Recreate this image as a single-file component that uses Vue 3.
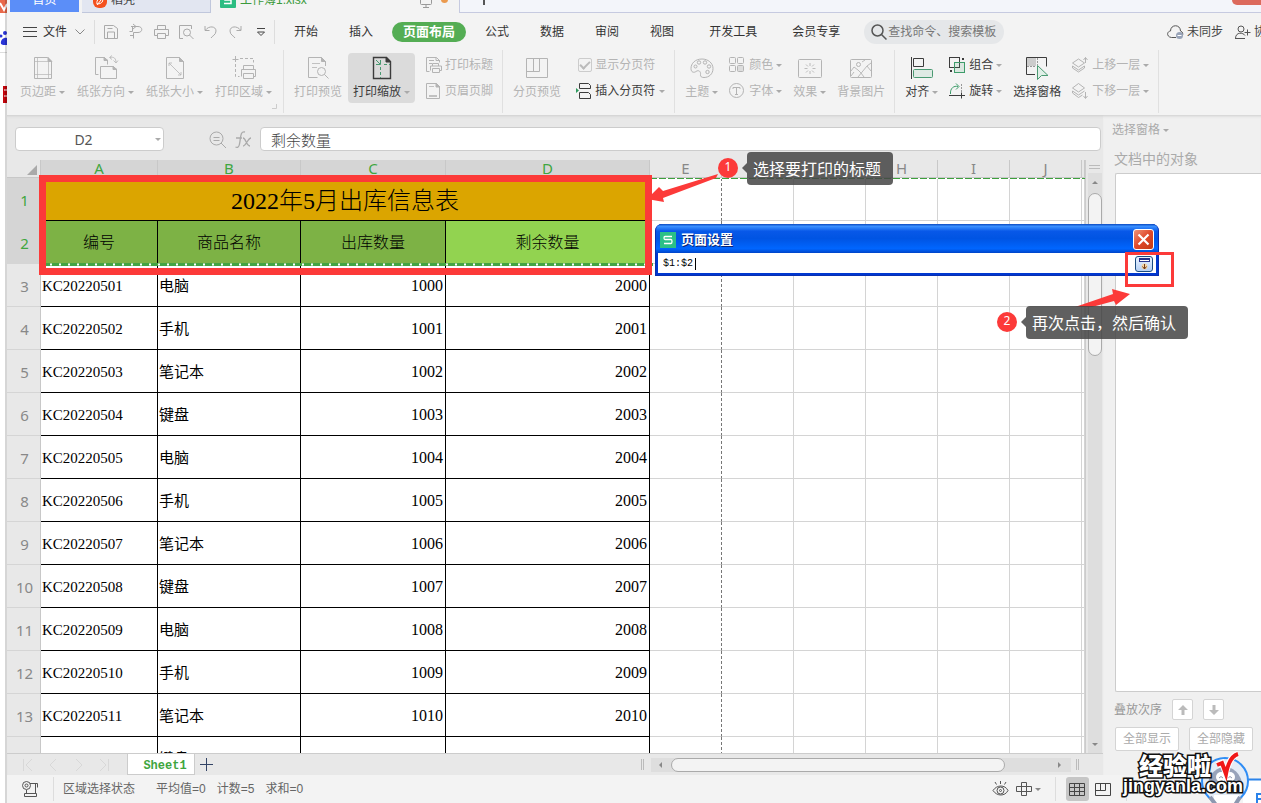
<script setup>
import { ref } from 'vue'

const formula = ref('剩余数量')
const cellName = ref('D2')
const printRows = ref('$1:$2')
const showBreaks = ref(true)
const query = ref('')

const icons = {
  margins: '<path d="M3.500 1.500h13l4 4v17h-17z"/><path d="M6.500 1.500v21M17.500 1.500v21M3 5.500h18M3 18.500h18" stroke-width=".7"/><path d="M17 1.500v4h4z" fill="currentColor"/>',
  orient: '<path d="M4.500 18.500h-3v-17h9l3 3v4"/><path d="M6.500 10.500h13l3 3v9h-16z"/><path d="M10 1.500v3h4zM19 10.500v3h4z" fill="currentColor"/><path d="M16 1.500c4-1 6 1 6 5m-2.500-2l2.500 2.500 2-2.500M18 -.5l-2.500 2 2.500 2" stroke-width=".8"/>',
  size: '<path d="M3.500 1.500h13l4 4v17h-17z"/><path d="M16.500 1.500v4h4z" fill="currentColor"/><path d="M6 7l12 12M6 10V7h3M18 16v3h-3" stroke-width=".8"/>',
  area: '<path d="M3.500 0v6M.5 3.500h6"/><path d="M8 2.500h13.500v4M3.500 8v12.500h4" stroke-dasharray="3 2"/><path d="M11.500 13v-3.500h10V13M9.500 20.500v-7h14v7h-2.500M11.500 17.500h10v5h-10z"/>',
  preview: '<path d="M19.500 10V5.500l-4-4h-13v20h9"/><path d="M15.500 1.500v4h4z" fill="currentColor"/><path d="M6 7.500h8M6 11.500h5" stroke-width=".8"/><circle cx="15.500" cy="15.500" r="4"/><path d="M18.500 18.500l4 4"/>',
  scale: '<path d="M3.500 1.500h13l4 4v17h-17z" stroke-width="1.400"/><path d="M16 1.500v4.500h5z" fill="currentColor"/><g stroke="#4a9a72"><path d="M6 4l4 4M10.500 4v4.500H6"/><path d="M14 8.500h6M10.500 11v11" stroke-dasharray="3 2"/></g>',
  breaks: '<path d="M1.500 2.500h21v19h-21zM1.500 15.500h13v-13M8.500 2.500v13"/>',
  theme: '<path d="M12 3C5 3 1 7.500 1 12.500c0 4 3 4.500 5 3 2.500-2 5 0 4.500 3-.3 2 1 3 3.500 3 5 0 9-3.500 9-9C23 7 18 3 12 3z"/><circle cx="5.500" cy="10.500" r="1.500"/><circle cx="9" cy="6.500" r="1.700"/><circle cx="15" cy="6.500" r="1.700"/><circle cx="19" cy="10.500" r="1.700"/><circle cx="17.500" cy="16" r="1.700"/>',
  effect: '<rect x=".5" y="3.500" width="23" height="18" rx="1"/><path d="M12 7v3M12 15v3M6.500 12.500h3M14.500 12.500h3M8 8.500l2 2M14 14.500l2 2M16 8.500l-2 2M8 16.500l2-2" stroke-width=".9"/>',
  backdrop: '<rect x="1.500" y="3.500" width="21" height="18" rx="1"/><circle cx="9.500" cy="8.500" r="2"/><path d="M2 15l3-4 4 3 3 3 3 4M9 21l9-11 4-3M2 20l3-4M13 6l3-2M18 10l4 5" stroke-width=".9"/>',
  align: '<path d="M1.500 1v22M3.500 2.500h10v8h-10z"/><rect x="3.500" y="13.500" width="19" height="8" rx="1" stroke="#4a9a72" fill="#dfeae4"/>',
  pane: '<path d="M10 18.500H1.500v-17h20v9"/><path d="M2 2h9v8H2z" fill="#ccc" stroke="none"/><path d="M12.500 2v7M2 10.500h9" stroke="#999" stroke-dasharray="2 1"/><path d="M12.500 9.500v14l4-4h6.500z" stroke="#4a9a72" fill="#e0efe7"/>',
  title: '<path d="M3.500 14.500h-3v-14h10l3 3v2"/><path d="M10 .5v3h4M3 3.500h5M3 6.500h3" /><path d="M6.500 9v-2.500h6V9M4.500 13.500v-4.500h11v4.500h-2M6.500 11.500h7v4h-7z"/>',
  headfoot: '<path d="M.5 .5h10l3 3v12H.5z"/><path d="M10 .5v3.500h4z" fill="currentColor"/><path d="M3 3.500h5M3 12.500h8M3 13.500h8" stroke-width=".8"/>',
  insbreak: '<path d="M3.500 5.500v-5h9l2 2v3zM3.500 15.500v-6h9l2 2v4z"/><path d="M3 7.500h13" stroke="#f3f3f3"/><path d="M0 5l3 2.500-3 2.500z" fill="#2f9a5e" stroke="none"/>',
  colors: '<rect x=".5" y=".5" width="6" height="6" rx="1"/><rect x="8.500" y=".5" width="6" height="6" rx="1"/><rect x=".5" y="8.500" width="6" height="6" rx="1"/><rect x="8.500" y="8.500" width="6" height="6" rx="1" fill="#ddd"/>',
  font: '<circle cx="7.500" cy="7.500" r="7"/><path d="M4 6V4.500h7V6M7.500 4.500v7M6 11.500h3"/>',
  combine: '<rect x=".5" y=".5" width="10" height="10"/><rect x="5.500" y="5.500" width="10" height="10" stroke="#3d9c6a" fill="#3d9c6a22"/><path d="M13 1h2v2h-2zM1 13h2v2H1z" fill="currentColor" stroke="none"/>',
  rotate: '<path d="M0 12.500h16M12.500 9.500v6"/><path d="M1.500 11C1 5 5 2.500 9 3.500M7 .5l3 3-3 3" stroke="#3d9c6a"/><path d="M12.500 1v8" stroke="#999" stroke-dasharray="2 1"/>',
  up: '<path d="M.5 6L6.500 2l6 4-6 4z"/><path d="M.5 9v2l6 4 6-4V9l-6 4z"/><path d="M13.500 6V.5M11.500 3l2-2.500 2 2.500"/>',
  down: '<path d="M.5 5L6.500 .5l6 4.500-6 4z"/><path d="M.5 8v2l6 4.500 4-2.500M.5 8l6 4 6-4M13.500 9v6M11.500 13l2 2.500 2-2.500"/>',
  save: '<path d="M1.500 14.500v-13h9l4 3v10zM4.500 14v-6h7v6M4.500 4.500h5"/>',
  exportfile: '<path d="M3 2.500h7c5 0 5 6 0 6H5.500v6M2 11.500h4M4.500 2v5.500h-3M5 0l3 2.500L5 5"/>',
  print: '<path d="M4.500 5V1.500h8V5M4 11.500H1.500v-6h14v6H13M4.500 9.500h8v5h-8z"/>',
  find: '<path d="M5 14.500H1.500v-13h12V5"/><circle cx="9" cy="8.500" r="3.500"/><path d="M11.500 11l4 4"/>',
  undo: '<path d="M2 2v4.500h4.500M2.500 6C6 1.500 13 2 13 7c0 4-4 5-5 7"/>',
  redo: '<path d="M13 2v4.500H8.500M12.500 6C9 1.500 2 2 2 7c0 4 4 5 5 7"/>'
}

const quick = ['save', 'exportfile', 'print', 'find', 'undo', 'redo']
const menusA = ['开始', '插入']
const menusB = ['公式', '数据', '审阅', '视图']
const menusC = ['开发工具', '会员专享']

const groups = [
  { id: 'setup', items: [
    { big: '页边距', icon: 'margins', caret: true },
    { big: '纸张方向', icon: 'orient', caret: true },
    { big: '纸张大小', icon: 'size', caret: true },
    { big: '打印区域', icon: 'area', caret: true }
  ] },
  { id: 'print', items: [
    { big: '打印预览', icon: 'preview' },
    { big: '打印缩放', icon: 'scale', caret: true, picked: true, on: true },
    { rows: [{ t: '打印标题', icon: 'title' }, { t: '页眉页脚', icon: 'headfoot' }] }
  ] },
  { id: 'page', items: [
    { big: '分页预览', icon: 'breaks' },
    { rows: [{ t: '显示分页符', check: true }, { t: '插入分页符', icon: 'insbreak', caret: true, on: true }] }
  ] },
  { id: 'theme', items: [
    { big: '主题', icon: 'theme', caret: true },
    { rows: [{ t: '颜色', icon: 'colors', caret: true }, { t: '字体', icon: 'font', caret: true }] },
    { big: '效果', icon: 'effect', caret: true },
    { big: '背景图片', icon: 'backdrop' }
  ] },
  { id: 'arrange', items: [
    { big: '对齐', icon: 'align', caret: true, on: true },
    { rows: [{ t: '组合', icon: 'combine', caret: true, on: true }, { t: '旋转', icon: 'rotate', caret: true, on: true }] },
    { big: '选择窗格', icon: 'pane', on: true },
    { rows: [{ t: '上移一层', icon: 'up', caret: true }, { t: '下移一层', icon: 'down', caret: true }] }
  ] }
]

const letters = ['A', 'B', 'C', 'D', 'E', 'F', 'G', 'H', 'I', 'J', '']
const heads = ['编号', '商品名称', '出库数量', '剩余数量']
const goods = ['电脑', '手机', '笔记本', '键盘']
const rows = Array.from({ length: 12 }, (_, i) => ({
  n: i + 3,
  code: 'KC202205' + String(i + 1).padStart(2, '0'),
  name: goods[i % 4],
  out: 1000 + i,
  left: 2000 + i
}))
</script>

<template>
  <div class="screen">
    <svg class="behind" width="7" height="803" viewBox="0 0 7 803" aria-hidden="true">
      <path d="M0 0h7v13H0z" fill="#e9694a" /><path d="M0 3l4 7 3-6" stroke="#fff" fill="none" stroke-width="2" />
      <g fill="#2a35d8"><circle cx="5" cy="33" r="2" /><circle cx="1" cy="36" r="1.500" /><path d="M1 44c-1-4 3-7 6-6v7H3z" /></g>
      <path d="M0 52.500h7" stroke="#ddd" /><path d="M3 86h4v17H3z" fill="#c4060d" />
      <path d="M4 90h3M4 96h3" stroke="#fff" />
      <path d="M5 0h2v803H5z" fill="#000" opacity=".16" />
    </svg>
    <div class="app">
      <nav class="tabs" aria-label="文档标签">
        <a class="tab home" href="#">首页</a>
        <a class="tab docer" href="#">
          <svg width="14" height="14" viewBox="0 0 14 14"><rect width="14" height="14" rx="6" fill="#f4511e" /><path d="M4 10C3 6 7 3 9 3c2 4 0 7-5 7zM4 11l4-5" stroke="#fff" fill="none" /></svg>
          稻壳
        </a>
        <a class="tab book" href="#">
          <svg width="16" height="16" viewBox="0 0 16 16"><rect width="16" height="16" rx="1" fill="#2bbd82" /><path d="M12 4.500H5v3.500h6v3.500H4" stroke="#fff" fill="none" stroke-width="1.500" /></svg>
          <span class="grow">工作簿1.xlsx</span>
          <svg width="12" height="12" viewBox="0 0 12 12" fill="none" stroke="#999"><rect x=".5" y="1.500" width="11" height="7" rx="1" /><path d="M6 8v3.500M3 11.500h6" /></svg>
          <i class="dot"></i>
        </a>
        <div class="spare"><i class="plus-stub"></i><i class="login"></i></div>
      </nav>

      <div class="menu">
        <button class="file">
          <svg width="14" height="12" viewBox="0 0 14 12" stroke="#444"><path d="M0 1.500h14M0 5.500h14M0 10.500h14" /></svg>
          文件
          <svg class="chev" width="10" height="6" viewBox="0 0 10 6" fill="none" stroke="#888"><path d="M.5 .5L5 5l4.500-4.500" /></svg>
        </button>
        <i class="bar"></i>
        <div class="quick">
          <button v-for="q in quick" :key="q" :aria-label="q"><svg width="16" height="16" viewBox="0 0 16 16" fill="none" stroke="#aaa" v-html="icons[q]"></svg></button>
          <button aria-label="more"><svg width="16" height="16" viewBox="0 0 16 16" fill="none" stroke="#444"><path d="M4 4.500h8M4.500 8l3.500 3.500L11.500 8z" /></svg></button>
        </div>
        <i class="bar"></i>
        <div class="menus">
          <button v-for="m in menusA" :key="m">{{ m }}</button>
          <button class="current">页面布局</button>
          <button v-for="m in menusB" :key="m">{{ m }}</button>
        </div>
        <div class="menus wide"><button v-for="m in menusC" :key="m">{{ m }}</button></div>
        <label class="search">
          <svg width="16" height="16" viewBox="0 0 16 16" fill="none" stroke="#555" stroke-width="1.500"><circle cx="6.500" cy="6.500" r="5.500" /><path d="M10.500 10.500l5 5" /></svg>
          <input v-model="query" aria-label="查找命令" placeholder="查找命令、搜索模板" />
        </label>
        <button class="sync">
          <svg width="17" height="16" viewBox="0 0 17 16" fill="none" stroke="#555"><path d="M9 13.500H4.500C-.5 13-.5 7.500 3.500 7c0-7 10-7 10 0 2.500 1 2.500 3 2 4.500" /><circle cx="12.500" cy="11.500" r="3.500" fill="#98a3b8" stroke="none" /><path d="M10.500 11.500h4" stroke="#fff" /></svg>
          未同步
        </button>
        <button class="coop">
          <svg width="15" height="14" viewBox="0 0 15 14" fill="none" stroke="#555"><circle cx="6" cy="4" r="3" /><path d="M.5 13.500c0-7 8-6 9.500-3M0 13.500h10M12.500 4.500v6M9.500 7.500h6" /></svg>
          协
        </button>
      </div>

      <div class="ribbon">
        <div v-for="g in groups" :key="g.id" class="group" :class="g.id">
          <template v-for="(it, k) in g.items" :key="k">
            <button v-if="it.big" class="big" :class="{ on: it.on, picked: it.picked }">
              <svg width="24" height="24" viewBox="0 0 24 24" fill="none" stroke="currentColor" v-html="icons[it.icon]"></svg>
              <span>{{ it.big }}<i v-if="it.caret" class="caret"></i></span>
            </button>
            <div v-else class="stack">
              <template v-for="r in it.rows" :key="r.t">
                <label v-if="r.check" class="small"><input v-model="showBreaks" type="checkbox" />{{ r.t }}</label>
                <button v-else class="small" :class="{ on: r.on }">
                  <svg width="16" height="16" viewBox="0 0 16 16" fill="none" stroke="currentColor" v-html="icons[r.icon]"></svg>{{ r.t }}<i v-if="r.caret" class="caret"></i>
                </button>
              </template>
            </div>
          </template>
          <svg v-if="g.id === 'setup'" class="launcher" width="5" height="5" viewBox="0 0 5 5" fill="none" stroke="#ccc"><path d="M4.500 0v4.500H0" /></svg>
        </div>
      </div>

      <div class="work">
        <main class="main">
          <div class="fbar">
            <div class="namebox"><input v-model="cellName" aria-label="名称框" /><i class="caret"></i></div>
            <svg class="fx" width="44" height="20" viewBox="0 0 44 20" fill="none" stroke="#aaa"><circle cx="7.500" cy="7.500" r="6.500" /><path d="M12 12l5 5M4.500 6.500h6M4.500 9.500h6" /><path d="M36 1c-5-1-4 5-5.500 12-.5 3-2 4-4 3M27 7h6M34 7c3 0 3 8 7 8M42 7c-3 0-5 8-8 8" stroke-width="1.300" /></svg>
            <input v-model="formula" class="formula" aria-label="编辑栏" />
          </div>
          <div class="sheet">
            <div class="grid">
              <table>
                <colgroup>
                  <col class="w0" /><col class="wa" /><col class="wb" /><col class="wc" /><col class="wd" />
                  <col v-for="n in 6" :key="n" class="we" /><col />
                </colgroup>
                <thead>
                  <tr>
                    <th class="corner"><svg width="10" height="10" viewBox="0 0 10 10"><path d="M10 0v10H0z" fill="#aaa" /></svg></th>
                    <th v-for="(l, i) in letters" :key="i" :class="{ sel: i < 4 }">{{ l }}</th>
                  </tr>
                </thead>
                <tbody>
                  <tr>
                    <th class="sel">1</th>
                    <td class="title" colspan="4">2022年5月出库信息表</td>
                    <td class="page-edge"></td><td v-for="n in 6" :key="n"></td>
                  </tr>
                  <tr>
                    <th class="sel">2</th>
                    <td v-for="h in heads" :key="h" class="head">{{ h }}</td>
                    <td class="page-edge"></td><td v-for="n in 6" :key="n"></td>
                  </tr>
                  <tr v-for="r in rows" :key="r.n">
                    <th>{{ r.n }}</th>
                    <td class="data">{{ r.code }}</td>
                    <td class="data">{{ r.name }}</td>
                    <td class="data num">{{ r.out }}</td>
                    <td class="data num">{{ r.left }}</td>
                    <td class="page-edge"></td><td v-for="n in 6" :key="n"></td>
                  </tr>
                </tbody>
              </table>
              <i class="print-line"></i>
              <svg class="ants" width="612" height="3" viewBox="0 0 612 3"><path d="M0 1.500h612" stroke="#43a443" stroke-width="3" /><path d="M9 1.500h603" stroke="#fff" stroke-width="2" stroke-dasharray="2 7" /></svg>
            </div>
            <div class="vscroll">
              <i class="split"></i>
              <div class="track"><i class="tri tup"></i><i class="thumb"></i><i class="tri tdown"></i></div>
            </div>
          </div>
          <div class="sheetbar">
            <svg class="nav" width="120" height="22" viewBox="0 0 120 22" fill="none" stroke="#d8d8d8"><path d="M16.500 5v12M25 5l-6 6 6 6M49 5l-6 6 6 6M69 5l6 6-6 6M93 5l6 6-6 6M101.500 5v12" /></svg>
            <button class="stab">Sheet1</button>
            <button class="add" aria-label="新建工作表"><svg width="14" height="14" viewBox="0 0 14 14" stroke="#334466"><path d="M6.500 0v13M0 6.500h13" /></svg></button>
            <i class="grip"></i>
            <div class="hscroll"><i class="tri tleft"></i><i class="hthumb"></i><i class="tri tright"></i></div>
            <i class="grip end"></i>
          </div>
        </main>
        <aside class="pane">
          <button class="ptitle">选择窗格<i class="caret"></i></button>
          <h2>文档中的对象</h2>
          <div class="objects"></div>
          <div class="order">
            叠放次序
            <button aria-label="上移"><svg width="10" height="10" viewBox="0 0 10 10"><path d="M5 0l5 5H6.500v5h-3V5H0z" fill="#bbb" /></svg></button>
            <button aria-label="下移"><svg width="10" height="10" viewBox="0 0 10 10"><path d="M5 10l5-5H6.500V0h-3v5H0z" fill="#bbb" /></svg></button>
          </div>
          <div class="showhide"><button>全部显示</button><button>全部隐藏</button></div>
        </aside>
      </div>

      <footer class="status">
        <svg width="17" height="17" viewBox="0 0 17 17" fill="none" stroke="#555"><circle cx="4.500" cy="4.500" r="4" /><circle cx="4.500" cy="4.500" r="1.500" /><path d="M8 2.500h7.500v4M13.500 3v9.500M4.500 9v3.500M2.500 12.500h12v3h-12z" /></svg>
        <i class="bar"></i>
        <span class="mode">区域选择状态</span><span>平均值=0</span><span>计数=5</span><span>求和=0</span>
        <svg class="views" width="49" height="18" viewBox="0 0 49 18" fill="none" stroke="#555"><path d="M1 10.500c4-6 12-6 15 0-3 6-11 6-15 0zM8.500 1v3M3 2l1.500 2.500M14 2l-1.500 2.500" /><circle cx="8.500" cy="10.500" r="3.500" /><circle cx="8.500" cy="10.500" r="1" /><path d="M29.500 2.500h5v13h-5zM24.500 6.500h15v5h-15z" /><path d="M43 8h6l-3 3z" fill="#888" stroke="none" /></svg>
        <i class="bar"></i>
        <button class="view picked" aria-label="普通视图"><svg width="17" height="15" viewBox="0 0 17 15" fill="none" stroke="#444"><path d="M.5 1.500h15v12H.5zM.5 5.500h15M.5 9.500h15M5.500 1.500v12M10.500 1.500v12" /></svg></button>
        <button class="view" aria-label="分页预览"><svg width="17" height="15" viewBox="0 0 17 15" fill="none" stroke="#444"><path d="M.5 1.500h15v12H.5zM.5 8.500h10v-7M5.500 1.500v7" /></svg></button>
        <i class="bar last"></i>
      </footer>
    </div>

    <section class="dialog" aria-label="页面设置">
      <header>
        <svg width="16" height="16" viewBox="0 0 16 16"><rect width="16" height="16" fill="#2bc086" /><path d="M12 4.500H5Q4 4.500 4 6t1 1.500h6q1 0 1 2t-1 2H4" stroke="#fff" fill="none" stroke-width="1.300" /></svg>
        <b>页面设置</b>
        <button class="close" aria-label="关闭"><svg width="13" height="13" viewBox="0 0 13 13" stroke="#fff" stroke-width="2.200"><path d="M1.500 1.500l10 10M11.500 1.500l-10 10" /></svg></button>
      </header>
      <div class="dbody">
        <input v-model="printRows" aria-label="顶端标题行" /><i class="cursor"></i>
        <button class="expand" aria-label="展开"><svg width="14" height="12" viewBox="0 0 14 12"><path d="M2 0h11v4H2z" fill="#26348c" /><path d="M3 2.500h9" stroke="#fff" /><circle cx="7.500" cy="8.500" r="3" fill="#f3d4a5" /><path d="M7.500 6v5M5.500 8.500l2 2.500 2-2.500" stroke="#733d18" fill="none" /></svg></button>
      </div>
    </section>

    <i class="frame f1"></i>
    <i class="frame f2"></i>
    <svg class="arrow a1" width="72" height="30" viewBox="0 0 72 30"><path d="M71 0L16 17l-4-4L0 25l17 3-1-4L69 4z" fill="#fc3a39" /></svg>
    <svg class="arrow a2" width="56" height="18" viewBox="0 0 56 18"><path d="M0 18L38 5l-1-5 18 5-14 11-2-4-22 6z" fill="#fc3a39" /></svg>
    <b class="mark m1">1</b>
    <b class="mark m2">2</b>
    <p class="tip t1">选择要打印的标题</p>
    <p class="tip t2">再次点击，然后确认</p>

    <div class="badge">
      <svg width="61" height="50" viewBox="0 0 61 50"><path d="M43 22.500h18V50H43z" fill="#fff" /><path d="M43 22.500h18M57 50V37h4M57 42h4" stroke="#2b83ea" stroke-width="2" fill="none" /><circle cx="25" cy="24" r="23" fill="#e4ecf6" stroke="#2f8df5" stroke-width="2" /><path d="M7 34c0-32 36-32 36 0z" fill="#98a3ba" /><circle cx="21" cy="20" r="5" fill="#fff" /><circle cx="30" cy="20" r="5" fill="#fff" /><path d="M19 21q2-3 4 0M28 21q2-3 4 0" stroke="#8d98b0" fill="none" /><path d="M14 38h25v10H14z" fill="#fff" /><path d="M10 40l6 8M40 40l-5 8" stroke="#8d98b0" stroke-width="4" /></svg>
      <strong class="cn">经验啦</strong>
      <svg class="tick" width="24" height="26" viewBox="0 0 24 26" fill="none"><path d="M2 13l5-2 4 11C13 11 16 4 23 2" stroke="#fff" stroke-width="6" /><path d="M2 13l5-2 4 11C13 11 16 4 23 2" stroke="#f01818" stroke-width="4" /></svg>
      <strong class="en">jingyanla.com</strong>
    </div>
  </div>
</template>

<style>
body { margin: 0; overflow: hidden; }
</style>

<style scoped>
* { box-sizing: border-box; }
.screen { position: relative; display: flex; height: 100vh; overflow: hidden; background: #fff; font: 12px/16px "Liberation Sans", "Noto Sans CJK SC", sans-serif; color: #444; }
.behind { flex: none; }
.app { flex: 1; min-width: 0; display: flex; flex-direction: column; background: #f3f3f3; }
button { padding: 0; border: 0; background: none; font: inherit; color: inherit; white-space: nowrap; }
input { font: inherit; color: inherit; border: 0; outline: 0; background: none; padding: 0; min-width: 0; }
a { color: inherit; text-decoration: none; }
svg { flex: none; display: block; overflow: visible; }
.caret { display: inline-block; margin-left: 3px; border: solid transparent; border-width: 3px 3px 0; border-top-color: #aaa; vertical-align: middle; }

.tabs { display: flex; height: 13px; overflow: hidden; flex: none; }
.tab { display: flex; align-items: flex-end; height: 13px; padding-bottom: 5px; white-space: nowrap; }
.home { width: 69px; margin: 0 3px; height: 12px; padding-bottom: 4px; justify-content: center; background: #5b8ef8; color: #fff; }
.docer { width: 129px; gap: 4px; padding-left: 11px; background: #e2e6f1; border: solid #c0c7dc; border-width: 0 1px 1px 0; padding-bottom: 4px; }
.book { width: 248px; gap: 4px; padding: 0 11px 5px 9px; color: #3c9a3c; }
.grow { flex: 1; }
.dot { width: 7px; height: 7px; margin: 0 0 5px 5px; border-radius: 4px; background: #eb9a4e; }
.spare { flex: 1; display: flex; justify-content: space-between; background: #f3f5fa; border: solid #c6cae0; border-width: 0 0 1px 1px; padding-left: 23px; }
.plus-stub { width: 2px; height: 5px; background: #555; }
.login { width: 29px; height: 5px; border-radius: 0 0 0 8px; background: #dc6a5c; }

.menu { display: flex; align-items: center; height: 37px; flex: none; padding-left: 16px; overflow: hidden; }
.bar { width: 1px; height: 24px; background: #ddd; flex: none; }
.file { display: flex; align-items: center; gap: 6px; margin-right: 9px; color: #333; }
.chev { margin-left: 2px; }
.quick { display: flex; gap: 9px; margin: 0 5px 0 8px; }
.menus { display: flex; align-items: center; gap: 31px; margin-left: 19px; color: #333; }
.menus.wide { gap: 35px; margin-left: 35px; }
.current { height: 20px; margin: 0 -12px; padding: 0 11px; border-radius: 10px; background: #54ad54; color: #fff; font-weight: 700; font-size: 13px; }
.search { display: flex; align-items: center; gap: 1px; width: 140px; height: 24px; margin-left: 24px; padding-left: 7px; border-radius: 12px; background: #e5e7e9; }
.search input { width: 112px; }
.search input::placeholder { color: #777; opacity: 1; }
.sync { display: flex; align-items: center; gap: 3px; margin-left: auto; }
.coop { display: flex; align-items: center; gap: 4px; margin: 0 -5px 0 12px; }

.ribbon { display: flex; height: 65px; flex: none; padding-bottom: 2px; }
.group { position: relative; display: flex; gap: 11px; padding: 3px 9px 0 10px; border-right: 1px solid #e0e0e0; }
.launcher { position: absolute; right: 6px; bottom: 4px; }
.setup { gap: 12px; padding: 3px 11px 0 13px; }
.print { gap: 6px; }
.print .stack { margin-left: 5px; }
.page { gap: 15px; }
.big, .small { color: #b4b4b4; }
.big.on, .small.on { color: #3c3c3c; }
.big { display: flex; flex-direction: column; align-items: center; gap: 4px; height: 50px; padding-top: 3px; }
.big.picked { padding: 3px 5px 0; border-radius: 4px; background: #dbdbdb; }
.stack { display: flex; flex-direction: column; gap: 10px; padding-top: 4px; }
.small { display: flex; align-items: center; gap: 4px; height: 16px; white-space: nowrap; }
.small .caret { margin-left: -1px; }
.print .small, .page .small { gap: 3px; }
.page .caret { margin-left: 1px; }
.small input { appearance: none; width: 14px; height: 14px; margin: 0 0 0 2px; border: 1px solid #ccc; border-radius: 2px; display: grid; place-items: center; }
.small input:checked::after { content: ""; width: 8px; height: 4px; border: solid #bbb; border-width: 0 0 2px 2px; rotate: -45deg; margin-bottom: 3px; }

.work { display: flex; flex: 1; min-height: 0; box-shadow: inset 0 3px 3px -2px #ccc; background: #e8e8e8; }
.main { flex: 1; min-width: 0; display: flex; flex-direction: column; }
.fbar { display: flex; align-items: flex-start; height: 45px; padding: 12px 2px 0 8px; flex: none; }
.namebox { display: flex; align-items: center; width: 149px; height: 24px; padding-right: 2px; border: 1px solid #ccc; border-radius: 4px; background: #fff; }
.namebox input { flex: 1; width: 100px; padding-right: 4px; text-align: center; font: 14px "Noto Sans", sans-serif; color: #555; }
.namebox .caret { margin: 0; }
.fx { margin: 4px 7px 0 45px; }
.formula { flex: 1; height: 24px; padding: 0 10px; border: 1px solid #ccc; border-radius: 4px; background: #fff; font-size: 15px; font-weight: 300; }

.sheet { display: flex; flex: 1; min-height: 0; border-bottom: 1px solid #ccc; }
.grid { position: relative; flex: 1; min-width: 0; overflow: hidden; background: #fff; border-right: 1px solid #ccc; }
table { table-layout: fixed; width: 100%; border-collapse: separate; border-spacing: 0; }
.w0 { width: 34px; } .wa { width: 117px; } .wb { width: 143px; } .wc { width: 145px; } .wd { width: 204px; } .we { width: 72px; }
th { padding: 0; font: 15px/18px "Noto Sans", sans-serif; color: #888; background: #e8e8e8; border: solid #c8c8c8; border-width: 0 1px 1px 0; }
th.sel { color: #3fa63f; background: #d5d5d5; }
thead th { height: 18px; line-height: 17px; }
tbody th { padding: 2px 0 0 2px; border-bottom-color: #d5d5d5; }
.corner svg { margin: 3px 3px 0 auto; }
tbody tr { height: 43px; }
td { padding: 0; border: solid #d4d4d4; border-width: 0 1px 1px 0; white-space: nowrap; color: #000; font-family: "Liberation Serif", "Noto Sans CJK SC", serif; }
td.page-edge { border-right: 1px dashed #777; }
.title, .head, .data { border-color: #000; }
.title { padding-top: 4px; background: #dba500; text-align: center; font-size: 24px; line-height: 32px; font-weight: 300; }
.head { padding-top: 2px; background: #7db245; text-align: center; font-size: 16px; font-weight: 300; }
.head:nth-child(5) { background: #92d350; }
.data { font-size: 15px; padding: 2px 2px 0 1px; }
.num { font-size: 16px; text-align: right; }
.print-line { position: absolute; left: 643px; right: 0; top: 18px; height: 1px; background: repeating-linear-gradient(90deg, #3da03d 0 7px, #fff 7px 9px); }
.ants { position: absolute; left: 34px; top: 103px; }

.vscroll { width: 17px; flex: none; display: flex; flex-direction: column; padding-right: 1px; }
.split { height: 4px; margin: 5px 2px 4px 3px; border: solid #bbb; border-width: 1px 0; }
.track { flex: 1; display: flex; flex-direction: column; align-items: center; background: #dedede; margin-left: 2px; }
.tri { border: 3px solid transparent; }
.tup { border-bottom-color: #888; margin: 5px 0 9px; }
.thumb { width: 14px; height: 163px; border: 1px solid #aaa; border-radius: 7px; background: #f3f3f3; }
.tdown { border-top-color: #888; margin: auto 0 4px; }

.sheetbar { display: flex; align-items: center; height: 21px; flex: none; }
.stab { align-self: stretch; width: 68px; padding: 3px 0 0 8px; border: solid #ccc; border-width: 0 1px 1px; background: #fff; color: #3fa63f; font: 700 12px "Liberation Mono", monospace; }
.add { margin-left: 5px; }
.grip { width: 3px; height: 11px; margin-left: auto; border: solid #bbb; border-width: 0 1px; }
.grip.end { margin: 0 24px 0 5px; }
.hscroll { display: flex; align-items: center; width: 420px; height: 14px; margin-left: 7px; padding: 0 7px 0 5px; background: #dedede; }
.tleft { border-right-color: #888; margin-right: 9px; }
.hthumb { flex: 1; height: 14px; border: 1px solid #aaa; border-radius: 7px; background: #f3f3f3; }
.tright { border-left-color: #888; margin-left: 53px; }

.pane { width: 158px; flex: none; display: flex; flex-direction: column; align-items: flex-start; padding: 7px 0 24px 9px; background: #f0f0f0; color: #aaa; box-shadow: inset 0 3px 3px -2px #ccc; }
.ptitle { height: 16px; }
h2 { margin: 10px 2px 5px; font: 14px/20px "Noto Sans CJK SC", sans-serif; }
.objects { align-self: stretch; flex: 1; margin-left: 3px; border: solid #ccc; border-width: 1px 0 1px 1px; border-radius: 2px 0 0 2px; background: #fff; }
.order { display: flex; align-items: center; gap: 10px; margin: 7px 0 7px 2px; color: #999; }
.order button { display: grid; place-items: center; width: 21px; height: 21px; border: 1px solid #d4d4d4; border-radius: 2px; background: #fff; }
.showhide { display: flex; gap: 10px; margin-left: 3px; }
.showhide button { width: 64px; height: 24px; border: 1px solid #d4d4d4; border-radius: 2px; background: #fff; }

.status { display: flex; align-items: center; height: 28px; flex: none; padding-left: 15px; color: #666; }
.status > .bar { margin: 0 10px 0 14px; }
.status > .bar:first-of-type { margin: 0 9px 0 14px; }
.status span { margin-right: 11px; }
.status .mode { margin-right: 21px; }
.status .views { margin-left: auto; }
.view { display: grid; place-items: center; width: 23px; height: 24px; margin-right: 3px; border-radius: 3px; }
.view.picked { background: #c6c6c6; }
.status > .last { margin: 0 134px 0 8px; }

.dialog { position: absolute; left: 655px; top: 224px; width: 504px; height: 52px; padding: 0 3px 3px; border-radius: 7px 7px 0 0; background: #0038d0; box-shadow: inset 0 0 0 1px #0a2fb0; }
.dialog header { display: flex; align-items: center; gap: 5px; height: 29px; margin: 0 -2px; padding: 2px 4px 0; border-radius: 6px 6px 0 0; background: linear-gradient(#0a49c0, #3a90ff 8%, #0858e8 25%, #0054e3 50%, #0066ff 85%, #0044c8); color: #fff; text-shadow: 1px 1px #0a2472; }
.dialog b { flex: 1; font-size: 13px; }
.close { display: grid; place-items: center; width: 21px; height: 21px; border: 1px solid #fff; border-radius: 3px; background: linear-gradient(135deg, #ee9478, #e0482a 50%, #c23c15); }
.dbody { display: flex; align-items: center; height: 20px; padding: 1px 3px 0 5px; background: #fff; color: #000; }
.dbody input { width: 32px; font: 10px "Liberation Mono", monospace; overflow: hidden; }
.cursor { width: 1px; height: 12px; background: #000; }
.expand { display: grid; place-items: center; width: 18px; height: 16px; margin: 0 0 0 auto; border: 1px solid #1c4c80; border-radius: 3px; background: linear-gradient(#eaf3ff, #b5d0f5); }

.frame { position: absolute; border: 7px solid #fc3a39; pointer-events: none; }
.f1 { left: 39px; top: 175px; width: 613px; height: 100px; }
.f2 { left: 1125px; top: 252px; width: 49px; height: 35px; border-width: 3px; }
.arrow { position: absolute; }
.a1 { left: 647px; top: 174px; }
.a2 { left: 1075px; top: 289px; }
.mark { position: absolute; width: 20px; height: 20px; border-radius: 50%; background: #fc3a39; color: #fff; font: 12px/18px "Noto Sans", sans-serif; text-align: center; }
.m1 { left: 718px; top: 158px; }
.m2 { left: 997px; top: 312px; }
.tip { position: absolute; margin: 0; height: 33px; padding: 0 6px; border-radius: 4px; background: rgba(70, 70, 70, .86); color: #fff; font-size: 16px; line-height: 36px; white-space: nowrap; }
.tip::before { content: ""; position: absolute; left: -5px; top: 11px; border: solid transparent; border-width: 5px 5px 5px 0; border-right-color: rgba(70, 70, 70, .86); }
.t1 { left: 747px; top: 152px; width: 146px; }
.t2 { left: 1026px; top: 306px; width: 162px; }

.badge { position: absolute; right: 0; bottom: 0; width: 140px; height: 50px; color: #fff; }
.badge > svg { position: absolute; right: 0; top: 4px; }
.badge > .tick { right: 22px; top: -1px; }
.badge strong { position: absolute; -webkit-text-stroke: 3px #111; paint-order: stroke fill; }
.cn { left: 18px; top: 0; font: 900 24px/24px "Noto Sans CJK SC", sans-serif; }
.en { left: 2px; top: 22px; font: 700 18px/22px "Liberation Sans", sans-serif; }
</style>
